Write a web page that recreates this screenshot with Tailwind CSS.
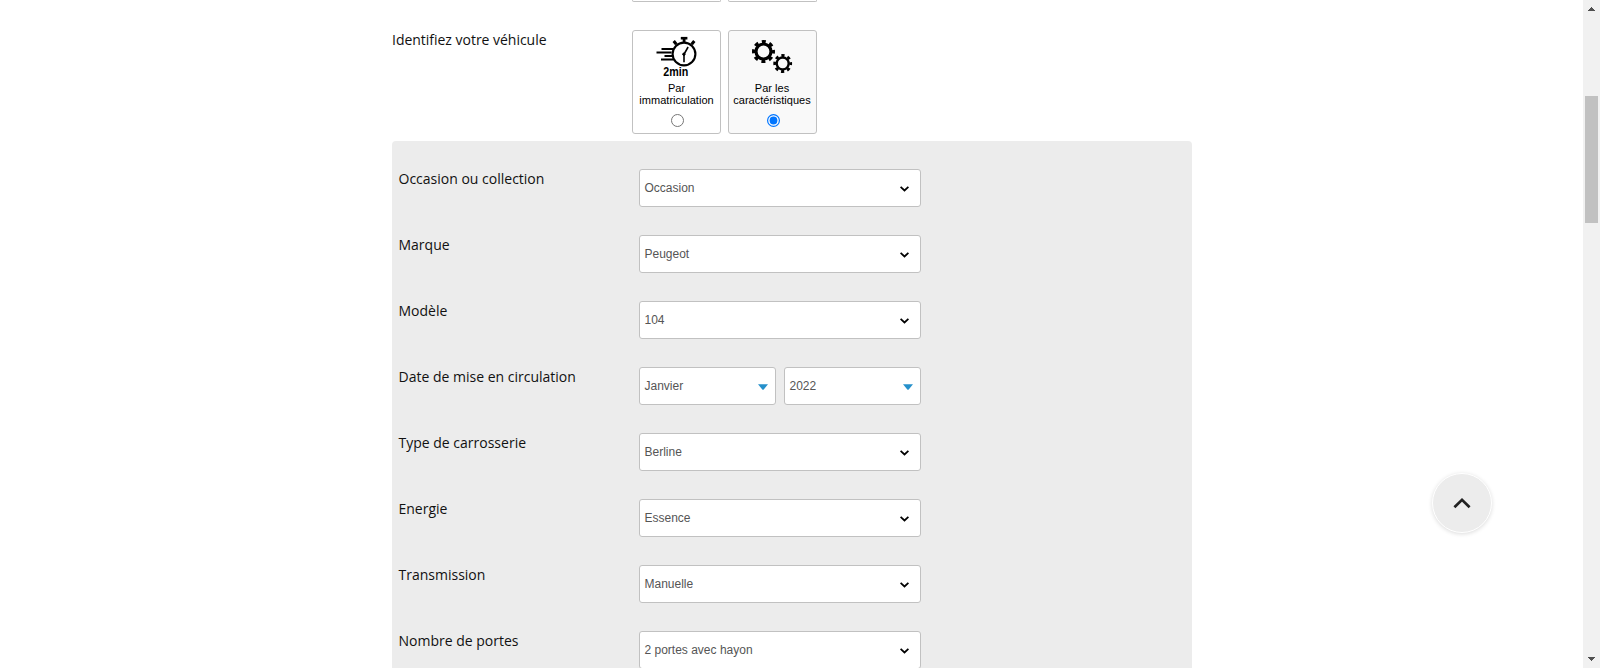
<!DOCTYPE html>
<html lang="fr">
<head>
<meta charset="utf-8">
<title>Identifiez votre véhicule</title>
<script src="https://cdn.jsdelivr.net/npm/@tailwindcss/browser@4"></script>
</head>
<body class="bg-white">
<div class="flex h-[668px] w-[1600px] overflow-hidden font-['Open_Sans',sans-serif] text-sm text-[#111]">
  <main class="h-full flex-1 overflow-hidden pl-[392px]">
    <!-- previous question, scrolled out -->
    <div class="flex h-[2px] items-end gap-[7px] pl-60">
      <div class="h-[2px] w-[89px] shrink-0 rounded-b-[3px] border border-t-0 border-[#c1c1c1]"></div>
      <div class="h-[2px] w-[89px] shrink-0 rounded-b-[3px] border border-t-0 border-[#c1c1c1]"></div>
    </div>
    <div class="mt-7 flex h-[104px]">
      <div class="w-60 leading-5 tracking-[-0.02px]">Identifiez votre véhicule</div>
      <div class="flex gap-[7px] text-center font-['Liberation_Sans',Arial,sans-serif] text-[11px] leading-3 text-black">
        <label class="flex w-[89px] flex-col items-center rounded-[3px] border border-[#c1c1c1] bg-white pt-[5px]">
          <svg class="h-[43px] w-12" viewBox="652.500 36 48 43" fill="none" stroke="#000">
            <circle cx="683.500" cy="54" r="11.400" stroke-width="2.100"/>
            <path d="M680.300 38.200h6.600" stroke-width="2.600"/>
            <path d="M683.600 38v4.500" stroke-width="2.800"/>
            <path d="M673.200 41l2.600 3.200M693.800 41l-2.600 3.200" stroke-width="3"/>
            <path d="M687.600 47l-4.100 7.300v8" stroke-width="1.600"/>
            <circle cx="683.400" cy="54.200" r="1.200" fill="#000"/>
            <path d="M661 49h11.500M656 52.500h15M664 56h7.500M660.500 59.500h12.500" stroke-width="1.800"/>
            <text x="662.700" y="76" fill="#000" stroke="none" font-family="Liberation Sans" font-weight="700" font-size="12" textLength="25" lengthAdjust="spacingAndGlyphs">2min</text>
          </svg>
          <span class="mt-[3px] tracking-[0.03px]">Par<br>immatriculation</span>
          <svg class="relative left-px mt-[8px] size-[13px]" viewBox="0 0 13 13"><circle cx="6.500" cy="6.500" r="6" fill="#fff" stroke="#767676"/></svg>
        </label>
        <label class="flex w-[89px] flex-col items-center rounded-[3px] border border-[#c1c1c1] bg-[#f9f9f9] pt-[5px]">
          <svg class="h-[43px] w-12" viewBox="749 36 48 43" fill="none" stroke="#000">
            <circle cx="763.500" cy="51.500" r="7.500" stroke-width="3.200"/>
            <circle cx="763.500" cy="51.500" r="9.900" stroke-width="3.200" stroke-dasharray="4 3.775" stroke-dashoffset="2"/>
            <circle cx="782.700" cy="63.500" r="6" stroke-width="2.400"/>
            <circle cx="782.700" cy="63.500" r="8" stroke-width="2.800" stroke-dasharray="3.200 3.083" stroke-dashoffset="1.600"/>
          </svg>
          <span class="mt-[3px] -ml-px tracking-[0.03px]">Par les<br>caractéristiques</span>
          <svg class="relative left-px mt-[8px] size-[13px]" viewBox="0 0 13 13"><circle cx="6.500" cy="6.500" r="5.900" fill="#fff" stroke="#0075ff" stroke-width="1.200"/><circle cx="6.500" cy="6.500" r="3.900" fill="#0075ff"/></svg>
        </label>
      </div>
    </div>
    <section id="rows" class="mt-[7px] flex h-[620px] w-[800px] flex-col gap-7 rounded-[4px] bg-[#ececec] pt-7 pl-[6.500px]"></section>
  </main>
  <!-- scrollbar -->
  <aside class="flex w-[17px] flex-col items-center bg-[#f1f1f1]">
    <svg class="mt-[7px] h-1 w-[7px]" viewBox="0 0 7 4" shape-rendering="crispEdges" fill="#505050"><path d="M3 0h1v1h1v1h1v1h1v1H0V3h1V2h1V1h1z"/></svg>
    <div class="mt-[85px] h-[127px] w-[13px] bg-[#c1c1c1]"></div>
    <svg class="mt-auto mb-[7px] h-1 w-[7px]" viewBox="0 0 7 4" shape-rendering="crispEdges" fill="#505050"><path d="M0 0h7v1H6v1H5v1H4v1H3V3H2V2H1V1H0z"/></svg>
  </aside>
</div>
<button class="fixed top-[473px] left-[1432px] flex size-[60px] items-center justify-center rounded-full border border-white bg-[#ececec] shadow-[0_1px_4px_rgba(0,0,0,0.14)]">
  <svg class="mr-px h-3 w-[18px]" viewBox="0 0 18 12" fill="none" stroke="#222" stroke-width="2.700"><path d="M1.400 10.200L9 2.800l7.600 7.400"/></svg>
</button>
<script>
  const rows = [
    ['Occasion ou collection', ['Occasion']],
    ['Marque', ['Peugeot']],
    ['Modèle', ['104']],
    ['Date de mise en circulation', ['Janvier', '2022']],
    ['Type de carrosserie', ['Berline']],
    ['Energie', ['Essence']],
    ['Transmission', ['Manuelle']],
    ['Nombre de portes', ['2 portes avec hayon']],
  ];
  const chevron = '<svg class="mt-px mr-[11px] h-[6px] w-[9px]" viewBox="0 0 9 6" fill="none" stroke="#000" stroke-width="1.750"><path d="M.6 .9l3.900 3.600L8.400 .9"/></svg>';
  const arrow = '<svg class="mt-0.5 mr-[7px] h-[6px] w-[10px]" viewBox="0 0 10 6" fill="#2590cb"><path d="M0 .3h10L5.500 5.700h-1z"/></svg>';
  document.getElementById('rows').innerHTML = rows.map(([label, values]) => `
    <div class="flex h-[38px] shrink-0">
      <div class="w-[240.500px] leading-5">${label}</div>
      <div class="flex w-[282px] gap-2">${values.map(v => `
        <div class="flex flex-1 items-center justify-between rounded-[3px] border border-[#c1c1c1] bg-white pl-[4.500px] font-['Liberation_Sans',Arial,sans-serif] text-xs text-[#555]"><span>${v}</span>${values.length > 1 ? arrow : chevron}</div>`).join('')}
      </div>
    </div>`).join('');
</script>
</body>
</html>
